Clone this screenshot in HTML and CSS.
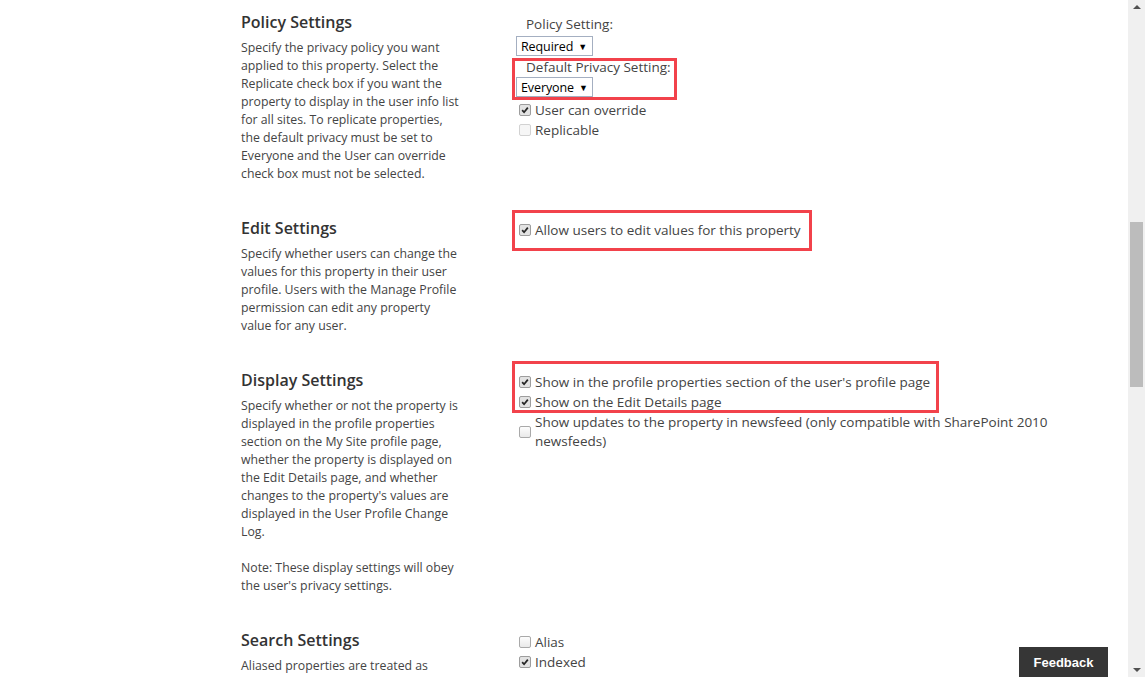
FILE: index.html
```html
<!DOCTYPE html>
<html lang="en">
<head>
    <meta charset="UTF-8">
    <title>Edit User Profile Property</title>
    <link rel="stylesheet" href="styles.css">
</head>
<body>
    <main class="settings">

        <!-- Policy -->
        <section class="group">
            <div class="group-info">
                <h2 class="group-title">Policy Settings</h2>
                <p class="group-desc">Specify the privacy policy you want applied to this property. Select the Replicate check box if you want the property to display in the user info list for all sites. To replicate properties, the default privacy must be set to Everyone and the User can override check box must not be selected.</p>
            </div>
            <div class="group-fields fields-policy">
                <div class="field-label">Policy Setting:</div>
                <div class="select">Required <span class="caret">&#9660;</span></div>
                <div class="mark mark-privacy">
                    <div class="field-label">Default Privacy Setting:</div>
                    <div class="select">Everyone <span class="caret">&#9660;</span></div>
                </div>
                <label class="check"><span class="box is-checked"><svg viewBox="0 0 12 12"><path d="M2.6 6.2 L4.9 8.7 L9.4 3.2"/></svg></span>User can override</label>
                <label class="check"><span class="box is-disabled"></span>Replicable</label>
            </div>
        </section>

        <!-- Edit -->
        <section class="group">
            <div class="group-info">
                <h2 class="group-title">Edit Settings</h2>
                <p class="group-desc">Specify whether users can change the values for this property in their user profile. Users with the Manage Profile permission can edit any property value for any user.</p>
            </div>
            <div class="group-fields">
                <div class="mark mark-edit">
                    <label class="check"><span class="box is-checked"><svg viewBox="0 0 12 12"><path d="M2.6 6.2 L4.9 8.7 L9.4 3.2"/></svg></span>Allow users to edit values for this property</label>
                </div>
            </div>
        </section>

        <!-- Display -->
        <section class="group">
            <div class="group-info">
                <h2 class="group-title">Display Settings</h2>
                <p class="group-desc">Specify whether or not the property is displayed in the profile properties section on the My Site profile page, whether the property is displayed on the Edit Details page, and whether changes to the property's values are displayed in the User Profile Change Log.</p>
                <p class="group-desc note">Note: These display settings will obey the user's privacy settings.</p>
            </div>
            <div class="group-fields">
                <div class="mark mark-display">
                    <label class="check"><span class="box is-checked"><svg viewBox="0 0 12 12"><path d="M2.6 6.2 L4.9 8.7 L9.4 3.2"/></svg></span>Show in the profile properties section of the user's profile page</label>
                    <label class="check"><span class="box is-checked"><svg viewBox="0 0 12 12"><path d="M2.6 6.2 L4.9 8.7 L9.4 3.2"/></svg></span>Show on the Edit Details page</label>
                </div>
                <label class="check check-wrap"><span class="box"></span>Show updates to the property in newsfeed (only compatible with SharePoint 2010 newsfeeds)</label>
            </div>
        </section>

        <!-- Search -->
        <section class="group">
            <div class="group-info">
                <h2 class="group-title">Search Settings</h2>
                <p class="group-desc">Aliased properties are treated as equivalent to the user name and account name when searching for items authored by a user.</p>
            </div>
            <div class="group-fields fields-search">
                <label class="check"><span class="box"></span>Alias</label>
                <label class="check"><span class="box is-checked"><svg viewBox="0 0 12 12"><path d="M2.6 6.2 L4.9 8.7 L9.4 3.2"/></svg></span>Indexed</label>
            </div>
        </section>

    </main>

    <button class="feedback">Feedback</button>

    <div class="scrollbar">
        <span class="scroll-arrow up"></span>
        <span class="scroll-thumb"></span>
        <span class="scroll-arrow down"></span>
    </div>
</body>
</html>
```

FILE: styles.css
```css
:root {
    --text: #444;
    --title: #333;
    --mark: #f2424b;
    --field-border: #a4afc1;
}

html, body {
    height: 100%;
}

body {
    margin: 0;
    overflow: hidden;
    background: #fff;
    color: var(--text);
    font-family: "Open Sans", "Noto Sans", sans-serif;
}

.settings {
    padding: 12px 0 0 241px;
}

.group {
    display: grid;
    grid-template-columns: 220px 540px;
    column-gap: 55px;
    margin-bottom: 35px;
}

.group-title {
    margin: 0 0 7px;
    font-size: 16px;
    line-height: 20px;
    font-weight: 600;
    color: var(--title);
}

.group-desc {
    margin: 0;
    font-size: 12.3px;
    line-height: 18px;
}

.group-desc.note {
    margin-top: 18px;
}

.group-fields {
    font-size: 13.5px;
}

.fields-policy {
    padding-top: 3px;
}

.fields-search {
    padding-top: 2px;
}

.field-label {
    padding-left: 10px;
    line-height: 18px;
}

.select {
    display: flex;
    align-items: center;
    gap: 5px;
    box-sizing: border-box;
    width: 77px;
    height: 20px;
    margin-top: 3px;
    padding: 0 0 0 4px;
    border: 1px solid var(--field-border);
    color: #000;
    font-size: 12.5px;
    letter-spacing: -0.1px;
}

.caret {
    font-size: 9px;
}

/* red annotation frames */
.mark {
    display: flex;
    flex-direction: column;
    align-items: flex-start;
    width: max-content;
    margin-left: -4px;
    padding-left: 1px;
    border: 3px solid var(--mark);
}

.mark-privacy {
    margin-top: 2px;
    padding-right: 3px;
}

.mark-privacy .field-label {
    line-height: 13px;
}

.mark-edit {
    margin-top: -8px;
    padding: 7px 8px 8px 1px;
}

.mark-display {
    margin-top: -9px;
    padding: 9px 6px 0 1px;
    gap: 2px;
}

.mark-display .check {
    line-height: 18px;
}

.mark-display .check:last-child {
    margin-bottom: -1px;
}

.check {
    display: flex;
    align-items: center;
    gap: 4px;
    padding-left: 3px;
    line-height: 20px;
}

.check-wrap {
    line-height: 19px;
}

.box {
    flex: none;
    box-sizing: border-box;
    width: 12px;
    height: 12px;
    border: 1px solid #a9a9a9;
    border-radius: 2px;
    background: linear-gradient(#fdfdfd, #e9e9e9);
}

.box.is-checked {
    background: #e3e3e3;
    border-color: #9d9d9d;
}

.box.is-disabled {
    border-color: #d2d2d2;
    background: #f6f6f6;
}

.box svg {
    display: block;
    width: 10px;
    height: 10px;
}

.box path {
    fill: none;
    stroke: #262626;
    stroke-width: 2.1;
}

.feedback {
    position: fixed;
    right: 37px;
    bottom: 0;
    width: 89px;
    height: 30px;
    border: none;
    background: #363636;
    color: #fff;
    font-family: "Liberation Sans", Arial, sans-serif;
    font-size: 13px;
    font-weight: bold;
}

/* fake window scrollbar */
.scrollbar {
    position: fixed;
    top: 0;
    right: 0;
    width: 17px;
    height: 100%;
    background: #f0f0f0;
}

.scroll-thumb {
    position: absolute;
    top: 222px;
    left: 2px;
    width: 13px;
    height: 165px;
    background: #bcbcbc;
}

.scroll-arrow {
    position: absolute;
    left: 5px;
    width: 0;
    height: 0;
    border-left: 4px solid transparent;
    border-right: 4px solid transparent;
}

.scroll-arrow.up {
    top: 5px;
    border-bottom: 4px solid #505050;
}

.scroll-arrow.down {
    bottom: 5px;
    border-top: 4px solid #505050;
}
```
